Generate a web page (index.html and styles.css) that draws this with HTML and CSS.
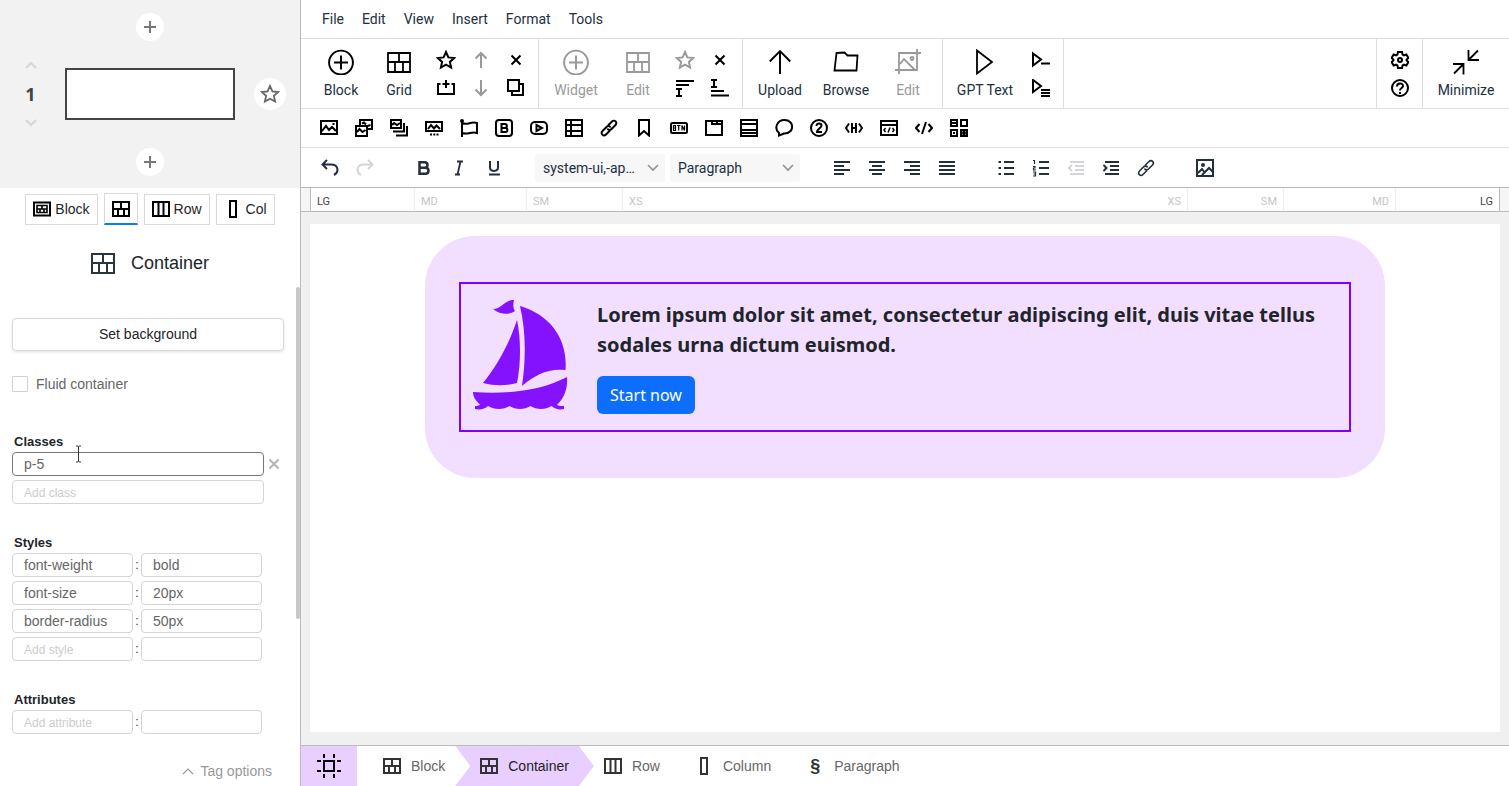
FILE: index.html
```html
<!DOCTYPE html>
<html lang="en">
<head>
<meta charset="utf-8">
<title>Page editor</title>
<link rel="stylesheet" href="styles.css">
</head>
<body>
<svg class="sprite" aria-hidden="true">
  <symbol id="plus" viewBox="0 0 14 14"><path d="M7 1v12M1 7h12" stroke-width="2"/></symbol>
  <symbol id="star" viewBox="0 0 20 20"><path d="M10 2l2.400 5.400 5.800.6-4.300 3.900 1.200 5.700-5.100-2.900-5.100 2.900 1.200-5.700L1.800 8l5.800-.6z"/></symbol>
  <symbol id="chev-up" viewBox="0 0 12 8"><path d="M1 7l5-5 5 5"/></symbol>
  <symbol id="chev-down" viewBox="0 0 12 8"><path d="M1 1l5 5 5-5"/></symbol>
  <symbol id="grid" viewBox="0 0 24 22"><path d="M1 2h22v19H1zM1 11h22M12 2v9M8 11v10M16 11v10"/></symbol>
  <symbol id="grid-sm" viewBox="0 0 18 16"><path d="M1 1h16v14H1zM1 8h16M9 1v7M6 8v7M12 8v7"/></symbol>
  <symbol id="block-sm" viewBox="0 0 18 15"><path d="M1 1h16v13H1z"/><path d="M4 4h10v7H4zM4 7.500h10M9 4v3.500M7 7.500V11M11 7.500V11" stroke-width="1.600"/></symbol>
  <symbol id="cols" viewBox="0 0 18 16"><path d="M1 1h16v14H1zM6.500 1v14M11.500 1v14"/></symbol>
  <symbol id="col" viewBox="0 0 18 18"><path d="M6 1h6v16H6z"/></symbol>
  <symbol id="add" viewBox="0 0 24 24"><path d="M12 6v13M5.500 12.500h13"/><circle cx="12" cy="12.500" r="11"/></symbol>
  <symbol id="up" viewBox="0 0 18 18"><path d="M9 17V2M3.500 7.500L9 2l5.500 5.500"/></symbol>
  <symbol id="down" viewBox="0 0 18 18"><path d="M9 1v15M3.500 10.500L9 16l5.500-5.500"/></symbol>
  <symbol id="x" viewBox="0 0 18 18"><path d="M4.500 4.500l9 9M13.500 4.500l-9 9"/></symbol>
  <symbol id="insert" viewBox="0 0 18 18"><path d="M3.500 5H1v10h16V5h-2.500M9 1v8M5.500 5h7"/></symbol>
  <symbol id="copy" viewBox="0 0 18 18"><path d="M1 1h11v11H1z"/><path d="M13 5h3v11H5v-3"/></symbol>
  <symbol id="before" viewBox="0 0 18 18"><path d="M0 2h18M0 6h13M0 10h6M0 17h6M3 10v7"/></symbol>
  <symbol id="after" viewBox="0 0 18 18"><path d="M0 1h6M0 8h6M3 1v7M0 12h13M0 16.500h18"/></symbol>
  <symbol id="upload" viewBox="0 0 24 24"><path d="M12 23V2M2.500 11.500L12 2l9.500 9.500"/></symbol>
  <symbol id="folder" viewBox="0 0 26 24"><path d="M3.500 3l8-.5 3 3h10l-1 15h-22z"/></symbol>
  <symbol id="crop" viewBox="0 0 26 26"><path d="M0 21h22V0M26 4H4v21M5 15l4-5 11 11"/><circle cx="17" cy="9.500" r="1.500"/></symbol>
  <symbol id="play" viewBox="0 0 24 26"><path d="M4 1.500v23l15-11.500z"/></symbol>
  <symbol id="play-line" viewBox="0 0 18 18"><path d="M1 2.500v12l8-6zM9 12.500h9"/></symbol>
  <symbol id="play-menu" viewBox="0 0 18 18"><path d="M1 1v12l8-6zM9 11h9M9 14h9M9 17h9"/></symbol>
  <symbol id="gear" viewBox="0 0 18 18"><path d="M7 1h4l.6 2.500 1.400.8 2.400-.8 2 3.400L15.600 8.500v1l1.800 1.600-2 3.400-2.400-.8-1.400.8L11 17H7l-.6-2.500-1.400-.8-2.400.8-2-3.400 1.800-1.600v-1L.6 6.900l2-3.400 2.400.8 1.400-.8z"/><circle cx="9" cy="9" r="2"/></symbol>
  <symbol id="help" viewBox="0 0 18 18"><circle cx="9" cy="9" r="8"/><path d="M6 7.500c0-4 6-4 6-.5 0 2-3 2-3 4.500M9 13v2"/></symbol>
  <symbol id="minimize" viewBox="0 0 26 26"><path d="M15.500 1v10H26M15.500 11L25 1.500M0 15h10.500v10.500M10.500 15L1 24.500"/></symbol>
  <symbol id="image" viewBox="0 0 18 18"><path d="M1 2h16v13H1zM2 12l4-5 3 4 3-3 4 4M12.500 5h2"/></symbol>
  <symbol id="images" viewBox="0 0 18 18"><path d="M5 6V1h12v9h-4M1 7h11v10H1zM2 13l2.500-3 3 3 3-2M7 4.500l2-1 2 2M12.500 7l3-1"/></symbol>
  <symbol id="stack" viewBox="0 0 18 18"><path d="M1 1h10v8H1zM2 6l2-2 3 2 3-2M3 12.500h11V4M6 16.500h11V7"/></symbol>
  <symbol id="slider" viewBox="0 0 18 18"><path d="M1 3h16v9H1zM3 10l3-4 3 3.500 2.500-3L15 10"/><path d="M5 15.500h2M8.300 15.500h2M11.500 15.500h2"/></symbol>
  <symbol id="flag" viewBox="0 0 18 18"><path d="M2 1v17M2 4c6 3 8-2 15 0v10C11 12 9 16 2 14"/><circle cx="2" cy="2" r="1"/></symbol>
  <symbol id="bold-box" viewBox="0 0 18 18"><rect x="1" y="1" width="16" height="16" rx="3"/><path d="M6.500 5h3.500c2.500 0 2.500 4 0 4H6.500zM6.500 9h4c2.500 0 2.500 4 0 4h-4z"/></symbol>
  <symbol id="video" viewBox="0 0 18 18"><rect x="1" y="3" width="16" height="12" rx="4"/><path d="M6.500 6v6L12 9z"/></symbol>
  <symbol id="table" viewBox="0 0 18 18"><path d="M1 1h16v16H1zM6 1v16M1 6h16M1 12h16"/></symbol>
  <symbol id="link" viewBox="0 0 18 18"><path d="M8 6.500l4-4c2.500-2.500 6 1 3.500 3.500l-4 4c-1.500 1.500-3.500 1-4-.5M10 11.500l-4 4C3.500 18-.1 14.500 2.500 12l4-4c1.500-1.500 3.500-1 4 .5"/></symbol>
  <symbol id="bookmark" viewBox="0 0 18 18"><path d="M4 1h10v15.500l-5-4.500-5 4.500z"/></symbol>
  <symbol id="button" viewBox="0 0 18 18"><rect x="1" y="4" width="16" height="10" rx="1.500"/><path d="M3.500 6.500v5h2v-5zM3.500 9h2M7 6.500h3.500M8.700 6.500v5M12 11.500v-5l2.500 5v-5" stroke-width="1.200"/></symbol>
  <symbol id="tabs" viewBox="0 0 18 18"><path d="M1 2h16v14H1zM7 2v3h10M12 2v3"/></symbol>
  <symbol id="accordion" viewBox="0 0 18 18"><path d="M1 1h16v16H1zM1 5h16M1 11h16M1 14h16"/></symbol>
  <symbol id="chat" viewBox="0 0 18 18"><path d="M4 16.500V14C-1 10 1.500 1 9.500 1 20 1 19.500 15 9 14.500z"/></symbol>
  <symbol id="two" viewBox="0 0 18 18"><circle cx="9" cy="9" r="8"/><path d="M6.500 7c0-3.500 5-3 5-.3 0 2-4.500 3.500-4.500 6.300h5"/></symbol>
  <symbol id="header" viewBox="0 0 18 18"><path d="M4 4.500L1 9l3 4.500M14 4.500L17 9l-3 4.500M7 4v10M11 4v10M7 9h4"/></symbol>
  <symbol id="code-box" viewBox="0 0 18 18"><path d="M1 2h16v14H1zM1 6h16"/><path d="M5.500 9L4 11l1.500 2M12.500 9l1.500 2-1.500 2M10 8.500L8 13.500" stroke-width="1.500"/></symbol>
  <symbol id="code" viewBox="0 0 18 18"><path d="M4.500 5L1 9l3.500 4M13.500 5L17 9l-3.500 4M11 3L7 15"/></symbol>
  <symbol id="qr" viewBox="0 0 18 18"><path d="M1 1h6v6H1zM11 1h6v6h-6zM1 11h6v6H1zM11 11h6v6h-6zM2 4h4M3 14h2M12.500 12.500l3 3M15.500 12.500l-3 3"/></symbol>
  <symbol id="undo" viewBox="0 0 18 18"><path d="M6 1L1.500 5.500 6 10M2 5.500h8c8 0 8 8 3 10.500"/></symbol>
  <symbol id="redo" viewBox="0 0 18 18"><path d="M12 1l4.500 4.500L12 10M16 5.500H8c-8 0-8 8-3 10.500"/></symbol>
  <symbol id="bold" viewBox="0 0 18 18"><path d="M4.500 3.200h5c4 0 4 5.600 0 5.600h-5zM4.500 8.800h6c4 0 4 6 0 6h-6z" stroke-width="2.500"/></symbol>
  <symbol id="italic" viewBox="0 0 18 18"><path d="M7 2.500h6M5 15.500h5M10.500 2.500l-3 13" stroke-width="1.800"/></symbol>
  <symbol id="underline" viewBox="0 0 18 18"><path d="M5 2v6.500c0 4.500 8 4.500 8 0V2M4 15.500h11"/></symbol>
  <symbol id="al" viewBox="0 0 18 18"><path d="M1 3h16M1 7h10M1 11h16M1 15h10"/></symbol>
  <symbol id="ac" viewBox="0 0 18 18"><path d="M1 3h16M4 7h10M1 11h16M4 15h10"/></symbol>
  <symbol id="ar" viewBox="0 0 18 18"><path d="M1 3h16M7 7h10M1 11h16M7 15h10"/></symbol>
  <symbol id="aj" viewBox="0 0 18 18"><path d="M1 3h16M1 7h16M1 11h16M1 15h16"/></symbol>
  <symbol id="ul" viewBox="0 0 18 18"><path d="M7 3h10M7 9h10M7 15h10M1.500 3H4M1.500 9H4M1.500 15H4"/></symbol>
  <symbol id="ol" viewBox="0 0 18 18"><path d="M7 3h10M7 9h10M7 15h10"/><path d="M1 1.500h1.500V5M1 7.500h2v1.500H1.500V11H4M1 13h2.500v4H1M1.500 15h2" stroke-width="1.200"/></symbol>
  <symbol id="outdent" viewBox="0 0 18 18"><path d="M3 3h14M8 7h9M8 11h9M3 15h14M5 6L2 9l3 3"/></symbol>
  <symbol id="indent" viewBox="0 0 18 18"><path d="M3 3h14M8 7h9M8 11h9M3 15h14M1.500 6l3 3-3 3"/></symbol>
  <symbol id="picture" viewBox="0 0 18 18"><path d="M1 1h16v16H1zM2 14l4-4 3 4M6 16l7-7 4 4"/><circle cx="7" cy="6" r="1"/></symbol>
  <symbol id="frame" viewBox="0 0 24 24"><path d="M7 7h10v10H7zM7 0v4M17 0v4M7 20v4M17 20v4M0 7h4M20 7h4M0 17h4M20 17h4"/></symbol>
</svg>

<div class="app">
  <aside class="sidebar">
    <div class="preview">
      <button class="round" aria-label="Add block above"><svg class="i14"><use href="#plus"/></svg></button>
      <div class="preview-row">
        <div class="order">
          <button aria-label="Move up"><svg class="chev"><use href="#chev-up"/></svg></button>
          <span>1</span>
          <button aria-label="Move down"><svg class="chev"><use href="#chev-down"/></svg></button>
        </div>
        <div class="thumb"></div>
        <button class="round round-lg" aria-label="Favourite"><svg class="i20"><use href="#star"/></svg></button>
      </div>
      <button class="round" aria-label="Add block below"><svg class="i14"><use href="#plus"/></svg></button>
    </div>

    <nav class="tabs">
      <button><svg class="i18"><use href="#block-sm"/></svg>Block</button>
      <button class="active" aria-label="Container"><svg class="i18"><use href="#grid-sm"/></svg></button>
      <button><svg class="i18"><use href="#cols"/></svg>Row</button>
      <button><svg class="i18"><use href="#col"/></svg>Col</button>
    </nav>

    <div class="panel">
      <h1><svg class="i24"><use href="#grid"/></svg>Container</h1>
      <button class="set-bg">Set background</button>
      <label class="check"><input type="checkbox">Fluid container</label>

      <section>
        <h2>Classes</h2>
        <div class="line"><input class="long focus" aria-label="Class" value="p-5"><button class="clear" aria-label="Remove class"><svg class="i18"><use href="#x"/></svg></button></div>
        <div class="line"><input class="long" aria-label="New class" placeholder="Add class"></div>
        <svg class="cursor" viewBox="0 0 7 18"><path d="M1 1h2l.5.5L4 1h2M3.500 1.500v15M1 17h2l.5-.5.5.5h2"/></svg>
      </section>
      <section>
        <h2>Styles</h2>
        <div class="line"><input aria-label="Property" value="font-weight"><span>:</span><input aria-label="Value" value="bold"></div>
        <div class="line"><input aria-label="Property" value="font-size"><span>:</span><input aria-label="Value" value="20px"></div>
        <div class="line"><input aria-label="Property" value="border-radius"><span>:</span><input aria-label="Value" value="50px"></div>
        <div class="line"><input aria-label="New property" placeholder="Add style"><span>:</span><input aria-label="New value"></div>
      </section>
      <section>
        <h2>Attributes</h2>
        <div class="line"><input aria-label="New attribute" placeholder="Add attribute"><span>:</span><input aria-label="Attribute value"></div>
      </section>
      <button class="tag-options"><svg class="chev"><use href="#chev-up"/></svg>Tag options</button>
    </div>
    <div class="scroll-thumb"></div>
  </aside>

  <main class="editor">
    <nav class="menubar">
      <button>File</button><button>Edit</button><button>View</button><button>Insert</button><button>Format</button><button>Tools</button>
    </nav>

    <div class="ribbon">
      <div class="group first">
        <button class="big"><svg class="i26"><use href="#add"/></svg>Block</button>
        <button class="big"><svg class="i26 g24"><use href="#grid"/></svg>Grid</button>
        <div class="smalls three">
          <button aria-label="Favourite"><svg class="i20"><use href="#star"/></svg></button>
          <button class="off" aria-label="Move up"><svg class="i18"><use href="#up"/></svg></button>
          <button aria-label="Delete"><svg class="i18"><use href="#x"/></svg></button>
          <button aria-label="Insert"><svg class="i18"><use href="#insert"/></svg></button>
          <button class="off" aria-label="Move down"><svg class="i18"><use href="#down"/></svg></button>
          <button aria-label="Duplicate"><svg class="i18"><use href="#copy"/></svg></button>
        </div>
      </div>
      <div class="group">
        <button class="big wide off"><svg class="i26"><use href="#add"/></svg>Widget</button>
        <button class="big off"><svg class="i26 g24"><use href="#grid"/></svg>Edit</button>
        <div class="smalls two">
          <button class="off" aria-label="Favourite widget"><svg class="i20"><use href="#star"/></svg></button>
          <button aria-label="Delete widget"><svg class="i18"><use href="#x"/></svg></button>
          <button aria-label="Insert before"><svg class="i18"><use href="#before"/></svg></button>
          <button aria-label="Insert after"><svg class="i18"><use href="#after"/></svg></button>
        </div>
      </div>
      <div class="group">
        <button class="big wide"><svg class="i26"><use href="#upload"/></svg>Upload</button>
        <button class="big wide"><svg class="i26"><use href="#folder"/></svg>Browse</button>
        <button class="big off"><svg class="i26"><use href="#crop"/></svg>Edit</button>
      </div>
      <div class="group">
        <button class="big wider"><svg class="i26"><use href="#play"/></svg>GPT Text</button>
        <div class="smalls one">
          <button aria-label="Continue text"><svg class="i18"><use href="#play-line"/></svg></button>
          <button aria-label="Text options"><svg class="i18"><use href="#play-menu"/></svg></button>
        </div>
      </div>
      <div class="group settings">
        <div class="smalls one">
          <button aria-label="Settings"><svg class="i18"><use href="#gear"/></svg></button>
          <button aria-label="Help"><svg class="i18"><use href="#help"/></svg></button>
        </div>
      </div>
      <div class="group last">
        <button class="big wider"><svg class="i26"><use href="#minimize"/></svg>Minimize</button>
      </div>
    </div>

    <div class="tools widgets">
      <div class="set">
        <button aria-label="Image"><svg class="i18"><use href="#image"/></svg></button>
        <button aria-label="Images"><svg class="i18"><use href="#images"/></svg></button>
        <button aria-label="Gallery"><svg class="i18"><use href="#stack"/></svg></button>
        <button aria-label="Slider"><svg class="i18"><use href="#slider"/></svg></button>
        <button aria-label="Flag"><svg class="i18"><use href="#flag"/></svg></button>
        <button aria-label="Icon"><svg class="i18"><use href="#bold-box"/></svg></button>
        <button aria-label="Video"><svg class="i18"><use href="#video"/></svg></button>
        <button aria-label="Table"><svg class="i18"><use href="#table"/></svg></button>
        <button aria-label="Link"><svg class="i18"><use href="#link"/></svg></button>
        <button aria-label="Bookmark"><svg class="i18"><use href="#bookmark"/></svg></button>
        <button aria-label="Button"><svg class="i18"><use href="#button"/></svg></button>
        <button aria-label="Tabs"><svg class="i18"><use href="#tabs"/></svg></button>
        <button aria-label="Accordion"><svg class="i18"><use href="#accordion"/></svg></button>
        <button aria-label="Popover"><svg class="i18"><use href="#chat"/></svg></button>
        <button aria-label="Counter"><svg class="i18"><use href="#two"/></svg></button>
        <button aria-label="Head code"><svg class="i18"><use href="#header"/></svg></button>
        <button aria-label="Embed"><svg class="i18"><use href="#code-box"/></svg></button>
        <button aria-label="Code"><svg class="i18"><use href="#code"/></svg></button>
        <button aria-label="QR code"><svg class="i18"><use href="#qr"/></svg></button>
      </div>
    </div>

    <div class="tools format">
      <div class="set">
        <button aria-label="Undo"><svg class="i18"><use href="#undo"/></svg></button>
        <button class="faint" aria-label="Redo"><svg class="i18"><use href="#redo"/></svg></button>
      </div>
      <div class="set">
        <button aria-label="Bold"><svg class="i18"><use href="#bold"/></svg></button>
        <button aria-label="Italic"><svg class="i18"><use href="#italic"/></svg></button>
        <button aria-label="Underline"><svg class="i18"><use href="#underline"/></svg></button>
      </div>
      <div class="set pickers">
        <div class="picker"><select aria-label="Font"><option>system-ui,-ap…</option></select><svg class="chev"><use href="#chev-down"/></svg></div>
        <div class="picker"><select aria-label="Text style"><option>Paragraph</option></select><svg class="chev"><use href="#chev-down"/></svg></div>
      </div>
      <div class="set">
        <button aria-label="Align left"><svg class="i18"><use href="#al"/></svg></button>
        <button aria-label="Align centre"><svg class="i18"><use href="#ac"/></svg></button>
        <button aria-label="Align right"><svg class="i18"><use href="#ar"/></svg></button>
        <button aria-label="Justify"><svg class="i18"><use href="#aj"/></svg></button>
      </div>
      <div class="set">
        <button aria-label="Bullet list"><svg class="i18"><use href="#ul"/></svg></button>
        <button aria-label="Numbered list"><svg class="i18"><use href="#ol"/></svg></button>
        <button class="faint" aria-label="Outdent"><svg class="i18"><use href="#outdent"/></svg></button>
        <button aria-label="Indent"><svg class="i18"><use href="#indent"/></svg></button>
        <button aria-label="Insert link"><svg class="i18 thin"><use href="#link"/></svg></button>
      </div>
      <div class="set">
        <button aria-label="Insert image"><svg class="i18"><use href="#picture"/></svg></button>
      </div>
    </div>

    <div class="ruler">
      <span class="lg on">LG</span><span class="md">MD</span><span class="sm">SM</span><span class="xs">XS</span>
      <span class="xs end">XS</span><span class="sm end">SM</span><span class="md end">MD</span><span class="lg end on">LG</span>
    </div>

    <div class="canvas">
      <div class="page">
        <div class="container">
          <div class="row">
            <svg class="boat" viewBox="0 0 95 110"><path d="M20 9c9 0 11-9 21-9-1 4-1 8 1 11-6 4-14 4-22-2zM47 6c31 9 48 34 45.500 64-17-2-31 5-43.500 16 4-28 4-54-2-80zM44 20c4 20 4 42 0 63-12 3-22 3-34 0C24 66 36 44 44 20zM0 92c32 2 65 0 94-15 1 12-3 21-10 28 2 1 4 1 7 1v3c-5 1-9 0-12.500-3-6 4-15 4-21 0-6 4-15 4-21 0-6 4-15 4-21.500 0-3 3-8 4-13 3v-3c2 0 4 0 5-1.500C3 101 0 97 0 92z"/></svg>
            <div class="copy">
              <p>Lorem ipsum dolor sit amet, consectetur adipiscing elit, duis vitae tellus sodales urna dictum euismod.</p>
              <a class="cta" href="#">Start now</a>
            </div>
          </div>
        </div>
      </div>
    </div>

    <nav class="crumbs">
      <button class="home" aria-label="Select page"><svg class="i24"><use href="#frame"/></svg></button>
      <button class="c-block"><svg class="i18"><use href="#grid-sm"/></svg>Block</button>
      <button class="c-active"><svg class="i18"><use href="#grid-sm"/></svg>Container</button>
      <button class="c-rest"><svg class="i18"><use href="#cols"/></svg>Row</button>
      <button class="c-rest"><svg class="i18"><use href="#col"/></svg>Column</button>
      <button class="c-rest"><span class="para">§</span>Paragraph</button>
    </nav>
  </main>
</div>
</body>
</html>
```

FILE: styles.css
```css
* { box-sizing: border-box; }
body { margin: 0; background: #fff; font: 14px/20px "Liberation Sans", sans-serif; color: #212529; }
button { font: inherit; color: inherit; background: none; border: 0; padding: 0; display: flex; align-items: center; justify-content: center; cursor: pointer; }
svg { display: block; flex: none; fill: none; stroke: currentColor; stroke-width: 2; }
h1, h2, p { margin: 0; }
.sprite { position: absolute; width: 0; height: 0; }
.i14 { width: 14px; height: 14px; }
.i18 { width: 18px; height: 18px; }
.i20 { width: 20px; height: 20px; }
.i24 { width: 24px; height: 24px; }
.i26 { width: 26px; height: 26px; stroke-width: 1.800; }
.g24 { width: 24px; }
.chev { width: 12px; height: 8px; }
.thin { stroke-width: 1.600; }

.app { display: flex; min-height: 100vh; }
.sidebar { position: relative; width: 301px; flex: none; border-right: 1px solid #bbb; display: flex; flex-direction: column; }

.preview { background: #f2f2f2; height: 188px; padding: 13px 0 12px; display: flex; flex-direction: column; align-items: center; justify-content: space-between; }
.round { width: 28px; height: 28px; border-radius: 50%; background: #fff; color: #777; }
.round-lg { width: 32px; height: 32px; justify-self: center; color: #666; }
.round-lg svg { stroke-width: 1.800; }
.preview-row { display: grid; grid-template-columns: 61px 1fr 61px; align-items: center; align-self: stretch; column-gap: 4px; margin-bottom: 2px; }
.order { display: flex; flex-direction: column; align-items: center; gap: 16px; font: bold 18px/18px "Noto Sans", sans-serif; color: #444; }
.order .chev { color: #d5d5d5; }
.thumb { height: 52px; border: 2px solid #444; background: #fff; }

.tabs { display: flex; justify-content: center; align-items: flex-end; gap: 6px; padding-top: 5px; }
.tabs button { height: 31px; padding: 0 7px 2px; gap: 4px; border: 1px solid #d9d9d9; }
.tabs svg { color: #000; }
.tabs .active { height: 32px; padding-bottom: 0; border-bottom: 2px solid #0d7bf5; }

.panel { padding: 25px 16px 5px 12px; display: flex; flex-direction: column; flex: 1; }
h1 { display: flex; justify-content: center; align-items: center; gap: 16px; padding-left: 4px; font-size: 18px; line-height: 26px; font-weight: 400; }
h1 svg { color: #2b3540; }
.set-bg { height: 33px; margin-top: 42px; padding-bottom: 2px; border: 1px solid #d9d9d9; border-radius: 4px; box-shadow: 0 1px 3px rgba(0,0,0,.12); }
.check { display: flex; align-items: center; gap: 8px; margin-top: 23px; color: #666; }
.check input { appearance: none; width: 16px; height: 16px; margin: 0; border: 1px solid #d0d0d0; border-radius: 1px; }
section { position: relative; margin-top: 25px; }
.check + section { margin-top: 38px; }
h2 { font-size: 13px; line-height: 20px; padding-left: 2px; }
.line { display: flex; align-items: center; height: 24px; margin-bottom: 4px; }
.line input { width: 121px; height: 24px; padding: 0 11px; border: 1px solid #d4d4d4; border-radius: 4px; font: 14px "Liberation Sans", sans-serif; color: #666; background: #fff; outline: 0; }
.line .long { width: 252px; }
.line .focus { border-color: #777; }
.line input::placeholder { font-size: 12px; color: #ccc; }
.line span { width: 8px; text-align: center; font-size: 12px; color: #333; }
.clear { width: 20px; color: #b5b5b5; }
.tag-options { margin-top: auto; align-self: flex-end; gap: 6px; margin-right: 12px; color: #999; }
.tag-options .chev { stroke-width: 1.200; }
.cursor { position: absolute; left: 63px; top: 13px; width: 7px; height: 18px; stroke: #333; stroke-width: 1; }
.scroll-thumb { position: absolute; right: 0; top: 287px; width: 4px; height: 332px; background: #c8c8c8; border-radius: 2px; }

.editor { flex: 1; min-width: 0; display: flex; flex-direction: column; font-family: Roboto, sans-serif; color: #222f3e; }
.menubar { display: flex; height: 39px; padding: 0 12px; border-bottom: 1px solid #ddd; }
.menubar button { padding: 0 9px; }

.ribbon { display: flex; height: 70px; border-bottom: 1px solid #ddd; }
.group { display: flex; padding: 0 5px 0 4px; border-right: 1px solid #ddd; }
.first { padding-left: 11px; }
.big { width: 58px; flex-direction: column; gap: 5px; padding-top: 2px; }
.big svg { color: #000; }
.wide { width: 66px; }
.wider { width: 76px; }
.off, .big.off svg { color: #999; }
.smalls { display: grid; grid-auto-rows: 28px; align-content: center; color: #000; }
.smalls .off { color: #999; }
.three { grid-template-columns: repeat(3, 35px); }
.two { grid-template-columns: repeat(2, 35px); }
.one { grid-template-columns: 35px; }
.settings { margin-left: auto; border-left: 1px solid #ddd; padding: 0 5px; }
.last { border-right: 0; padding: 0 5px; }

.tools { display: flex; align-items: center; gap: 24px; padding-left: 10px; border-bottom: 1px solid #ddd; height: 39px; }
.set { display: flex; }
.set button { width: 35px; height: 28px; }
.widgets { color: #000; }
.format { height: 40px; padding-left: 11px; border-bottom-color: #bbb; }
.faint { color: #d3d5d8; }
.pickers { gap: 5px; }
.picker { position: relative; }
.picker select { appearance: none; width: 130px; height: 28px; padding: 0 20px 0 8px; border: 0; border-radius: 3px; background: #f7f7f7; font: 14px Roboto, sans-serif; color: #222f3e; }
.picker .chev { position: absolute; right: 6px; top: 10px; color: #8d949c; stroke-width: 1.600; pointer-events: none; }

.ruler { display: flex; height: 24px; padding: 0 9px; border-bottom: 1px solid #bbb; background: linear-gradient(#fff, #fff) content-box, #f5f5f5; font-size: 11px; line-height: 27px; color: #c5c5c5; }
.ruler span { height: 23px; padding: 0 6px; border-left: 1px solid #eee; }
.ruler .end { text-align: right; border-left: 0; border-right: 1px solid #eee; }
.ruler .on { color: #444; border-color: #bbb; }
.ruler .lg { width: 104px; }
.ruler .md { width: 112px; }
.ruler .sm { width: 96px; }
.ruler .xs { flex: 1; }

.canvas { flex: 1; display: flex; padding: 12px 9px 13px; background: #f0f0f0; font-family: "Noto Sans", sans-serif; }
.page { flex: 1; padding: 12px; background: #fff; color: #212529; }
.container { max-width: 960px; margin: 0 auto; padding: 48px 36px; border-radius: 50px; background: #f2dfff; }
.row { display: flex; gap: 29px; padding: 16px 12px; outline: 2px solid #8000ff; }
.boat { width: 95px; height: 110px; fill: #8512ff; stroke: none; }
.row p { font-size: 20px; line-height: 30px; font-weight: 700; margin-bottom: 16px; }
.cta { display: inline-block; padding: 7px 13px; border-radius: 6px; background: #0d6efd; color: #fff; font-size: 16px; line-height: 24px; text-decoration: none; vertical-align: top; }

.crumbs { display: flex; height: 41px; border-top: 1px solid #bbb; font-family: "Liberation Sans", sans-serif; color: #666; }
.crumbs button { gap: 10px; }
.crumbs svg, .para { color: #333; }
.crumbs .home { width: 56px; background: #e9cfff; }
.crumbs .home svg { color: #000; }
.crumbs .c-block { padding: 0 10px 0 26px; }
.crumbs .c-active { padding: 0 25px; background: #e9cfff; color: #222; clip-path: polygon(0 0, calc(100% - 15px) 0, 100% 50%, calc(100% - 15px) 100%, 0 100%, 15px 50%); }
.crumbs .c-rest { padding: 0 25px 0 10px; }
.para { width: 18px; text-align: center; font-size: 18px; font-weight: 700; }
```
